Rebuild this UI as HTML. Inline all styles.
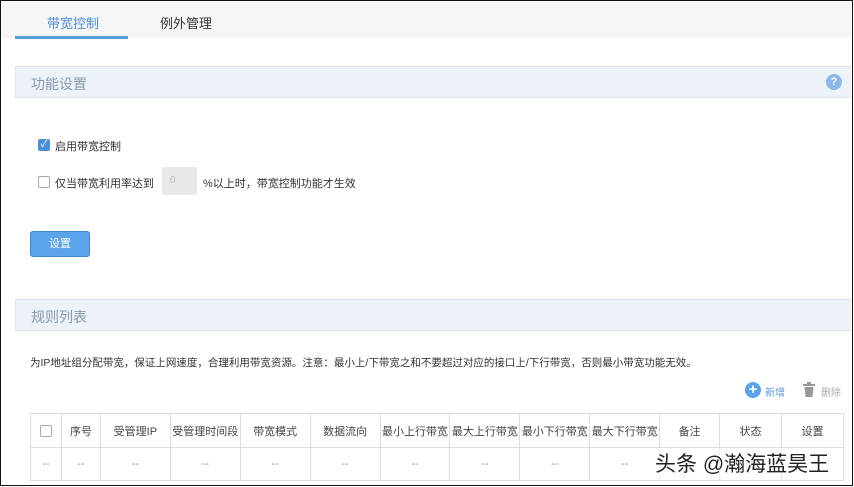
<!DOCTYPE html>
<html><head><meta charset="utf-8"><style>
*{margin:0;padding:0;box-sizing:border-box}
body{width:854px;height:487px;background:#fff;font-family:"Liberation Sans","Noto Sans CJK SC",sans-serif;position:relative;overflow:hidden;color:#333}
.a{position:absolute}
.frame{left:0;top:0;width:853px;height:486px;border:1.5px solid #111;border-top-width:1px}
.t{font-size:12px;white-space:nowrap}
.bar{left:15px;width:836px;height:32px;background:#edf2f8;border:1px solid #dbe3ec;border-right:none;font-size:14px;color:#8a9aaa;padding:7px 0 0 15px}
table{border-collapse:collapse;font-size:11px;color:#444}
td{border:1px solid #ddd;text-align:center;height:34px;padding:0}
tr.d td{color:#999;height:33px}
</style></head><body>
<div class="a" style="left:2px;top:2px;width:849px;height:36px;background:#f5f5f5"></div>
<div class="a t" style="left:47px;top:13px;font-size:13px;color:#4a90d9">带宽控制</div>
<div class="a t" style="left:160px;top:13px;font-size:13px;color:#333">例外管理</div>
<div class="a" style="left:15px;top:36px;width:113px;height:3px;background:#5b9bd5"></div>

<div class="a bar" style="top:66px">功能设置</div>
<div class="a" style="left:826px;top:74px;width:16px;height:16px;border-radius:50%;background:#8cb8ea;color:#fff;font-size:11px;text-align:center;line-height:16px;font-weight:bold">?</div>

<div class="a" style="left:38px;top:139px;width:12px;height:12px;border-radius:2px;background:#4a90d9;color:#fff;font-size:10px;line-height:12px;text-align:center">✓</div>
<div class="a t" style="left:55px;top:138px;font-size:11px">启用带宽控制</div>
<div class="a" style="left:38px;top:176px;width:12px;height:12px;border:1px solid #aaa;border-radius:2px;background:#fff"></div>
<div class="a t" style="left:55px;top:175px;font-size:11px">仅当带宽利用率达到</div>
<div class="a" style="left:162px;top:167px;width:35px;height:28px;background:#e8e8e8;border-radius:2px;font-size:10px;color:#bbb;padding:8px 0 0 8px">0</div>
<div class="a t" style="left:203px;top:175px;font-size:11px">%以上时，带宽控制功能才生效</div>

<div class="a" style="left:30px;top:231px;width:60px;height:26px;background:#5ba4ec;border:1px solid #3d86d0;border-radius:3px;color:#fff;font-size:11px;text-align:center;line-height:24px">设置</div>

<div class="a bar" style="top:299px">规则列表</div>
<div class="a t" style="left:30px;top:355px;font-size:10.5px;color:#333">为IP地址组分配带宽，保证上网速度，合理利用带宽资源。注意：最小上/下带宽之和不要超过对应的接口上/下行带宽，否则最小带宽功能无效。</div>

<div class="a" style="left:745px;top:382px;width:16px;height:16px;border-radius:50%;background:#5ba4ec;color:#fff;font-size:15px;line-height:15px;text-align:center;font-weight:bold">+</div>
<div class="a t" style="left:765px;top:384px;font-size:10px;color:#5b9bd5">新增</div>
<svg class="a" style="left:802px;top:382px" width="14" height="16"><rect x="1" y="2" width="12" height="2" fill="#999"/><rect x="5" y="0" width="4" height="2" fill="#999"/><path d="M2.5 5h9l-1 10h-7z" fill="#999"/></svg>
<div class="a t" style="left:821px;top:384px;font-size:10px;color:#aaa">删除</div>

<table class="a" style="left:30px;top:413px;width:814px">
<colgroup><col style="width:31px"><col style="width:39px"><col style="width:70px"><col style="width:70px"><col style="width:70px"><col style="width:70px"><col style="width:70px"><col style="width:70px"><col style="width:70px"><col style="width:70px"><col style="width:60px"><col style="width:62px"><col style="width:62px"></colgroup>
<tr><td><span style="display:inline-block;width:12px;height:12px;border:1px solid #aaa;border-radius:2px;vertical-align:middle"></span></td><td>序号</td><td>受管理IP</td><td>受管理时间段</td><td>带宽模式</td><td>数据流向</td><td>最小上行带宽</td><td>最大上行带宽</td><td>最小下行带宽</td><td>最大下行带宽</td><td>备注</td><td>状态</td><td>设置</td></tr>
<tr class="d"><td>--</td><td>--</td><td>--</td><td>--</td><td>--</td><td>--</td><td>--</td><td>--</td><td>--</td><td>--</td><td></td><td></td><td></td></tr>
</table>
<div class="a t" style="left:655px;top:448px;font-size:21px;color:#222;background:rgba(255,255,255,0.6)">头条 @瀚海蓝昊王</div>
<div class="a frame"></div>
</body></html>
